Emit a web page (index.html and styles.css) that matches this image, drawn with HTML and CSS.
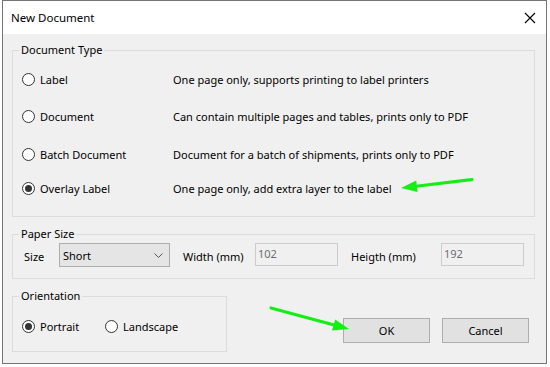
FILE: index.html
```html
<!DOCTYPE html>
<html lang="en">

<head>
    <meta charset="UTF-8">
    <meta name="viewport" content="width=device-width, initial-scale=1.0">
    <title>New Document</title>
    <link rel="stylesheet" href="styles.css">
</head>

<body>

    <div class="window">
        <div class="titlebar">
            <span class="title">New Document</span>
            <svg class="close" width="12" height="12" viewBox="0 0 12 12">
                <path d="M1 1 L11 11 M11 1 L1 11" stroke="#000" stroke-width="1.1" fill="none" />
            </svg>
        </div>

        <div class="content">
            <fieldset class="group doc-type">
                <legend>Document Type</legend>
                <div class="type-list">
                    <div class="type-row">
                        <div class="option"><span class="radio"></span><span class="option-name">Label</span></div>
                        <span class="type-desc">One page only, supports printing to label printers</span>
                    </div>
                    <div class="type-row">
                        <div class="option"><span class="radio"></span><span class="option-name">Document</span></div>
                        <span class="type-desc">Can contain multiple pages and tables, prints only to PDF</span>
                    </div>
                    <div class="type-row batch">
                        <div class="option"><span class="radio"></span><span class="option-name">Batch Document</span></div>
                        <span class="type-desc">Document for a batch of shipments, prints only to PDF</span>
                    </div>
                    <div class="type-row last">
                        <div class="option"><span class="radio checked"></span><span class="option-name">Overlay Label</span></div>
                        <span class="type-desc">One page only, add extra layer to the label</span>
                    </div>
                </div>
            </fieldset>

            <fieldset class="group paper">
                <legend>Paper Size</legend>
                <div class="paper-row">
                    <span class="field-label size-label">Size</span>
                    <div class="select">
                        <span>Short</span>
                        <svg width="9" height="6" viewBox="0 0 9 6">
                            <path d="M0.5 0.5 L4.5 4.5 L8.5 0.5" stroke="#555" stroke-width="1" fill="none" />
                        </svg>
                    </div>
                    <span class="field-label width-label">Width (mm)</span>
                    <input class="num-input" type="text" value="102" disabled>
                    <span class="field-label height-label">Heigth (mm)</span>
                    <input class="num-input" type="text" value="192" disabled>
                </div>
            </fieldset>

            <div class="bottom">
                <fieldset class="group orientation">
                    <legend>Orientation</legend>
                    <div class="orient-row">
                        <div class="option portrait"><span class="radio checked"></span><span class="option-name">Portrait</span></div>
                        <div class="option"><span class="radio"></span><span class="option-name">Landscape</span></div>
                    </div>
                </fieldset>

                <div class="buttons">
                    <button type="button">OK</button>
                    <button type="button">Cancel</button>
                </div>
            </div>
        </div>
    </div>

    <!-- annotation arrows drawn over the dialog -->
    <svg class="arrows" width="550" height="367" viewBox="0 0 550 367">
        <line x1="472" y1="179.5" x2="414" y2="186.5" stroke="#14ee14" stroke-width="3.2" stroke-linecap="round" />
        <polygon points="401,188 417.6,192 416.2,180.5" fill="#14ee14" />
        <line x1="271" y1="308" x2="336" y2="325.5" stroke="#14ee14" stroke-width="3.2" stroke-linecap="round" />
        <polygon points="349,329 332,330.5 335.2,319.5" fill="#14ee14" />
    </svg>

</body>

</html>
```

FILE: styles.css
```css
/* Reset some default styles */
* {
    margin: 0;
    padding: 0;
    box-sizing: border-box;
}

body {
    position: relative;
    width: 550px;
    height: 367px;
    font-family: 'Noto Sans', 'Open Sans', sans-serif;
    font-size: 11px;
    color: #000;
    background-color: #ffffff;
    overflow: hidden;
}

.window {
    width: 545px;
    height: 364px;
    margin-left: 2px;
    border: 1px solid #747474;
    background-color: #f0f0f0;
}

.titlebar {
    height: 33px;
    background-color: #ffffff;
    display: flex;
    align-items: center;
    justify-content: space-between;
    padding: 0 8px 0 8px;
}

.title {
    font-size: 11.5px;
}

.close {
    margin-right: 2px;
}

.content {
    padding-top: 8px;
}

/* Group boxes */
.group {
    border: 1px solid #dcdcdc;
    margin: 0 11px 0 9px;
}

.group legend {
    margin-left: 6px;
    padding: 0 2px;
    line-height: 16px;
    font-size: 11px;
}

.doc-type {
    padding: 11px 0 18px 0;
}

.type-list {
    display: flex;
    flex-direction: column;
    gap: 17px;
    padding-left: 9px;
}

.type-row {
    display: flex;
    align-items: center;
    height: 20px;
}

.type-row.batch {
    margin-top: 1px;
}

.type-row.last {
    margin-top: -3px;
}

.type-row .option {
    width: 151px;
}

.option {
    display: flex;
    align-items: center;
}

.radio {
    width: 13px;
    height: 13px;
    border: 1px solid #333;
    border-radius: 50%;
    background-color: #fff;
    display: inline-flex;
    align-items: center;
    justify-content: center;
    flex-shrink: 0;
}

.radio.checked::after {
    content: '';
    width: 7px;
    height: 7px;
    border-radius: 50%;
    background-color: #333;
}

.option-name {
    margin-left: 5px;
}

/* Paper size */
.paper {
    margin-top: 9px;
    padding: 1px 0 11px 0;
}

.paper-row {
    display: flex;
    align-items: center;
    height: 24px;
    padding-left: 11px;
}

.field-label {
    padding-top: 3px;
}

.size-label {
    width: 35px;
}

.width-label {
    width: 72px;
    margin-left: 13px;
}

.height-label {
    width: 90px;
    margin-left: 13px;
}

.select {
    width: 111px;
    height: 24px;
    border: 1px solid #adadad;
    background-color: #e5e5e5;
    display: flex;
    align-items: center;
    justify-content: space-between;
    padding: 0 6px 0 3px;
}

.select svg {
    margin-top: 1px;
}

.num-input {
    width: 83px;
    height: 23px;
    border: 1px solid #cccccc;
    background-color: #f0f0f0;
    color: #6d6d6d;
    font-family: 'Noto Sans', 'Open Sans', sans-serif;
    font-size: 11px;
    padding: 0 0 3px 2px;
    align-self: flex-start;
}

/* Orientation and buttons */
.bottom {
    display: flex;
    align-items: flex-start;
    margin-top: 9px;
}

.orientation {
    width: 215px;
    margin-right: 0;
    padding: 12px 0 15px 0;
}

.orient-row {
    display: flex;
    align-items: center;
    height: 20px;
    padding-left: 9px;
}

.option.portrait {
    width: 83px;
}

.buttons {
    margin-left: auto;
    margin-right: 17px;
    padding-top: 30px;
    display: flex;
    gap: 12px;
}

.buttons button {
    width: 87px;
    height: 25px;
    border: 1px solid #adadad;
    background-color: #e1e1e1;
    font-family: 'Noto Sans', 'Open Sans', sans-serif;
    font-size: 11px;
    color: #000;
}

.arrows {
    position: absolute;
    top: 0;
    left: 0;
    pointer-events: none;
}
```
